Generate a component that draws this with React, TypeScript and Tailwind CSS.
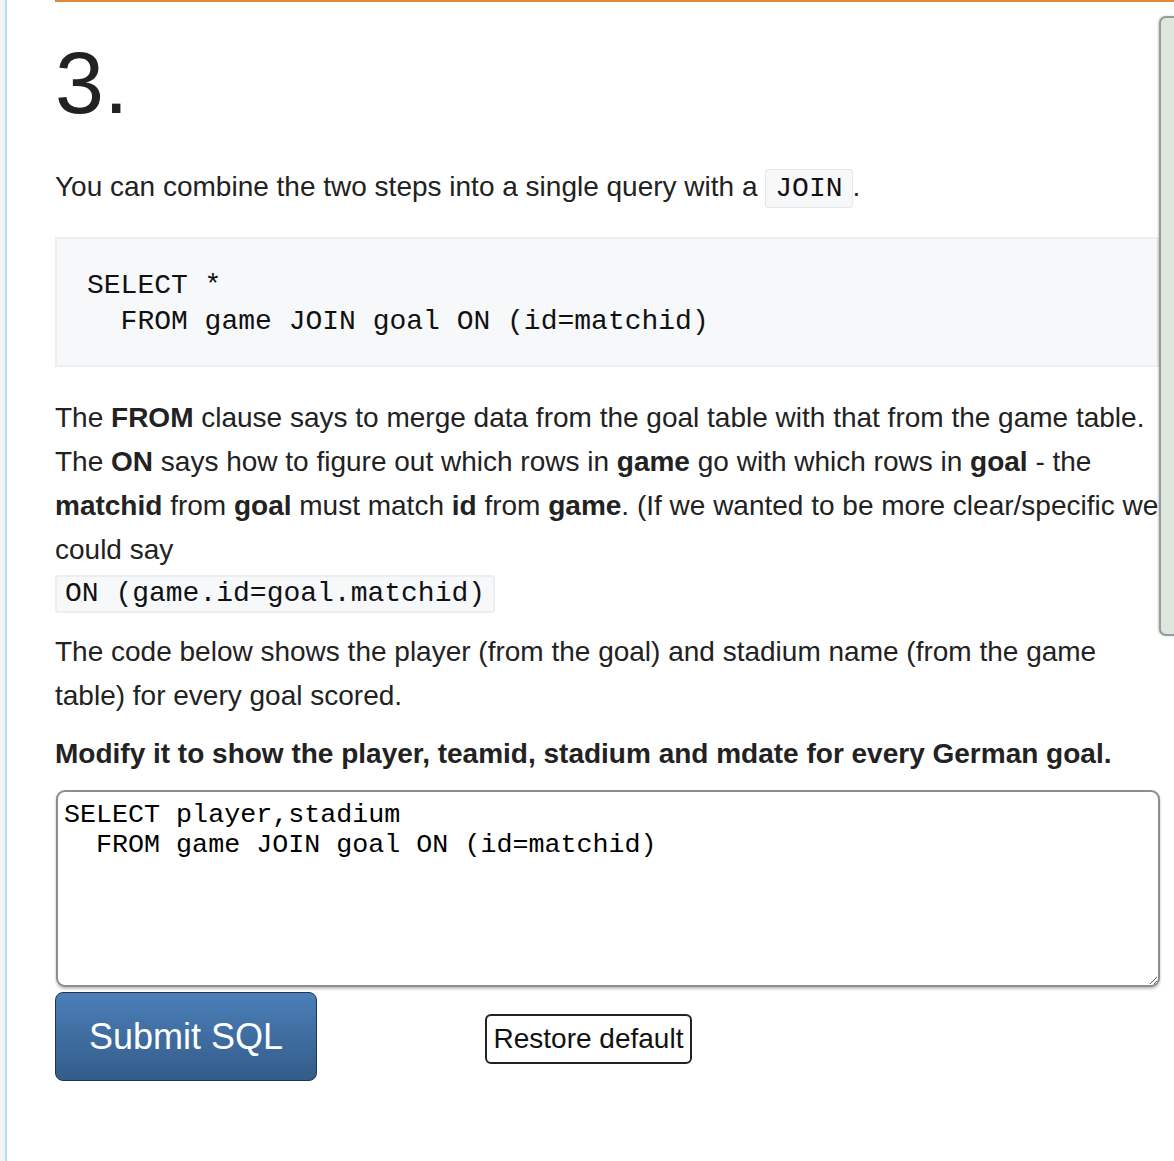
import React from 'react';

const mono = { fontFamily: '"Liberation Mono", "Courier New", monospace' };

const App: React.FC = () => {
  return (
    <div
      className="relative flex min-h-[1161px] w-[1174px] overflow-hidden bg-white text-[#222]"
      style={{ fontFamily: '"Liberation Sans", Arial, sans-serif' }}
    >
      {/* left gutter */}
      <div className="w-[5px] shrink-0 bg-[#f3f3f3]" />
      <div className="w-[2px] shrink-0 bg-[#b8dbf6]" />

      <div className="flex-1 pl-[48px]">
        <div className="h-[2px] bg-[#e0883a]" />

        <div className="w-[1104px]">
          <h2 className="mt-[37px] text-[88px] leading-[88px] font-normal">3.</h2>

          <p className="mt-[38px] text-[28px] leading-[44px]">
            You can combine the two steps into a single query with a{' '}
            <code
              className="rounded-[3px] border border-[#e4e6e9] bg-[#f7f8fa] px-[9px] py-[3px] text-[28px] text-[#111]"
              style={mono}
            >
              JOIN
            </code>
            .
          </p>

          <pre
            className="mt-[26px] border-2 border-[#eceef0] bg-[#f7f8fa] pt-[29px] pb-[25px] pl-[30px] text-[28px] leading-[36px] text-[#111]"
            style={mono}
          >
{`SELECT *
  FROM game JOIN goal ON (id=matchid)`}
          </pre>

          <div className="mt-[29px] text-[28px] leading-[44px]">
            The <b>FROM</b> clause says to merge data from the goal table with that from the game table.
            The <b>ON</b> says how to figure out which rows in <b>game</b> go with which rows in <b>goal</b> - the{' '}
            <b>matchid</b> from <b>goal</b> must match <b>id</b> from <b>game</b>. (If we wanted to be more
            clear/specific we could say
            <code
              className="mt-[3px] block w-fit rounded-[3px] border-2 border-[#eceef0] bg-[#f7f8fa] px-[8px] text-[28px] leading-[34px] text-[#111]"
              style={mono}
            >
              ON (game.id=goal.matchid)
            </code>
          </div>

          <p className="mt-[17px] text-[28px] leading-[44px]">
            The code below shows the player (from the goal) and stadium name (from the game table) for every goal
            scored.
          </p>

          <p className="mt-[14px] text-[28px] leading-[44px] font-bold">
            Modify it to show the player, teamid, stadium and mdate for every German goal.
          </p>

          <textarea
            className="mt-[14px] ml-[1px] block h-[197px] w-[1104px] rounded-[9px] border-2 border-[#8a8d92] bg-white pt-[8px] pl-[6px] text-[26.7px] leading-[30px] text-black shadow-[0_2px_3px_rgba(0,0,0,0.25)] outline-none"
            style={mono}
            defaultValue={`SELECT player,stadium
  FROM game JOIN goal ON (id=matchid)`}
          />

          <div className="mt-[5px] flex items-center">
            <button className="h-[89px] w-[262px] rounded-[8px] border border-[#1e3452] bg-gradient-to-b from-[#4b7fb8] to-[#345c8a] text-[36px] text-white">
              Submit SQL
            </button>
            <button className="mt-[5px] ml-[168px] h-[50px] w-[207px] rounded-[6px] border-2 border-[#222] bg-white text-[28px] text-[#111]">
              Restore default
            </button>
          </div>
        </div>
      </div>

      {/* side panel peeking in on the right */}
      <div className="absolute top-[16px] left-[1159px] h-[620px] w-[40px] rounded-l-[7px] border-2 border-[#9a9a9a] bg-[#dde7dd] shadow-[-1px_0_2px_rgba(0,0,0,0.2)]" />
    </div>
  );
};

export default App;
